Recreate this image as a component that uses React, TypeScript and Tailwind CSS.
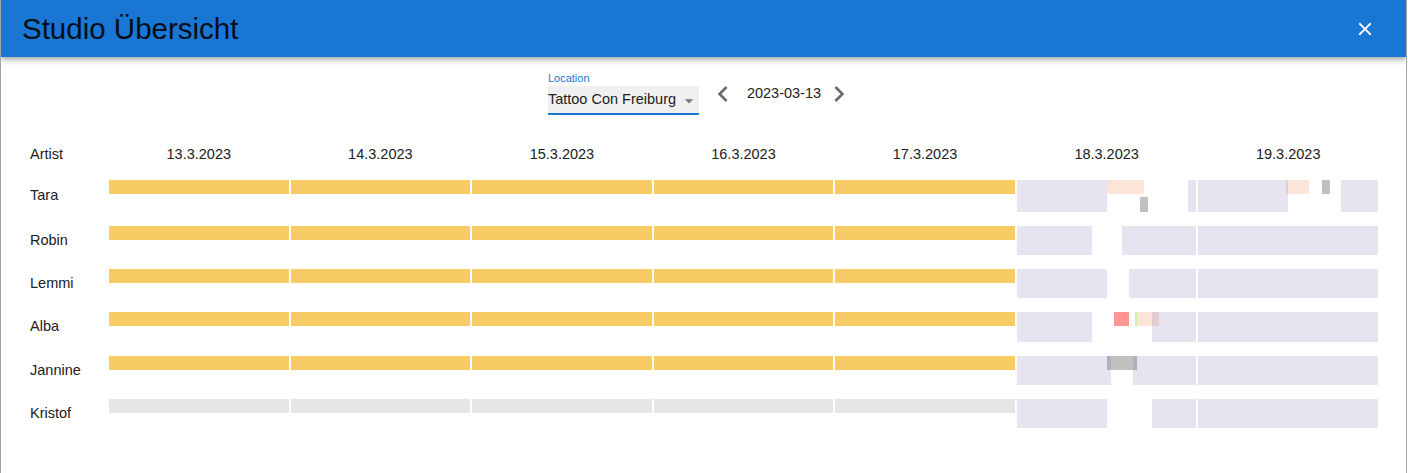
import React from "react";

type Block = {
  from: number;
  to: number;
  kind: "free" | "peach" | "gray" | "red" | "green";
  line?: "top" | "bottom" | "full";
};

interface ArtistRow {
  name: string;
  height: number;
  week: "booked" | "off";
  d18: Block[];
  d19: Block[];
}

const days = ["13.3.2023", "14.3.2023", "15.3.2023", "16.3.2023", "17.3.2023", "18.3.2023", "19.3.2023"];

const fullDay: Block[] = [{ from: 0, to: 100, kind: "free" }];

const rows: ArtistRow[] = [
  {
    name: "Tara",
    height: 32,
    week: "booked",
    d18: [
      { from: 50, to: 70.7, kind: "peach", line: "top" },
      { from: 68.5, to: 73, kind: "gray", line: "bottom" },
      { from: 0, to: 50, kind: "free" },
      { from: 95.5, to: 100, kind: "free" },
    ],
    d19: [
      { from: 48.8, to: 61.6, kind: "peach", line: "top" },
      { from: 68.8, to: 73.3, kind: "gray", line: "top" },
      { from: 0, to: 50, kind: "free" },
      { from: 79.4, to: 100, kind: "free" },
    ],
  },
  {
    name: "Robin",
    height: 29,
    week: "booked",
    d18: [
      { from: 0, to: 41.8, kind: "free" },
      { from: 58.5, to: 100, kind: "free" },
    ],
    d19: fullDay,
  },
  {
    name: "Lemmi",
    height: 29,
    week: "booked",
    d18: [
      { from: 0, to: 50, kind: "free" },
      { from: 62.4, to: 100, kind: "free" },
    ],
    d19: fullDay,
  },
  {
    name: "Alba",
    height: 30,
    week: "booked",
    d18: [
      { from: 54, to: 62.4, kind: "red", line: "top" },
      { from: 65.8, to: 67, kind: "green", line: "top" },
      { from: 67, to: 79.2, kind: "peach", line: "top" },
      { from: 0, to: 41.8, kind: "free" },
      { from: 75.2, to: 100, kind: "free" },
    ],
    d19: fullDay,
  },
  {
    name: "Jannine",
    height: 29,
    week: "booked",
    d18: [
      { from: 50.1, to: 66.8, kind: "gray", line: "top" },
      { from: 0, to: 52.4, kind: "free" },
      { from: 64.6, to: 100, kind: "free" },
    ],
    d19: fullDay,
  },
  {
    name: "Kristof",
    height: 29,
    week: "off",
    d18: [
      { from: 0, to: 50, kind: "free" },
      { from: 75.2, to: 100, kind: "free" },
    ],
    d19: fullDay,
  },
];

const kindClass: Record<Block["kind"], string> = {
  free: "bg-[rgba(120,100,170,0.18)]",
  peach: "bg-[#fce5d8]",
  gray: "bg-[#c0c0c0]",
  red: "bg-[#ff9595]",
  green: "bg-[#c9f7a0]",
};

const lineClass = {
  top: "top-0 h-[14px]",
  bottom: "bottom-0 h-[15px]",
  full: "top-0 bottom-0",
};

function DayTimeline({ blocks }: { blocks: Block[] }) {
  return (
    <div className="relative h-full">
      {blocks.map((b, i) => (
        <div
          key={i}
          className={`absolute ${lineClass[b.line ?? "full"]} ${kindClass[b.kind]}`}
          style={{ left: `${b.from}%`, width: `${b.to - b.from}%` }}
        />
      ))}
    </div>
  );
}

export default function App() {
  return (
    <div className="w-[1407px] h-[473px] overflow-hidden border-x border-[#a3a3a3] bg-white font-['Liberation_Sans',Arial,sans-serif] text-[#212121]">
      {/* Header */}
      <header className="relative z-10 h-[57px] bg-[#1976d2] flex items-center justify-between pl-[21px] pr-[30px] shadow-[0_2px_4px_-1px_rgba(0,0,0,0.2),0_4px_5px_0_rgba(0,0,0,0.14),0_1px_10px_0_rgba(0,0,0,0.12)]">
        <h1 className="text-[29.5px] leading-none text-black/90">Studio Übersicht</h1>
        <button className="w-[22px] h-[22px] text-white">
          <svg viewBox="0 0 24 24" className="w-[22px] h-[22px]" fill="currentColor">
            <path d="M19 6.41 17.59 5 12 10.59 6.41 5 5 6.41 10.59 12 5 17.59 6.41 19 12 13.41 17.59 19 19 17.59 13.41 12z" />
          </svg>
        </button>
      </header>

      {/* Location + date */}
      <div className="flex justify-center items-center mt-[15px] pr-[4px]">
        <div className="flex flex-col w-[151px]">
          <span className="text-[11px] leading-[13px] text-[#1976d2]">Location</span>
          <div className="mt-[1px] h-[29px] bg-[#f0f0f0] border-b-2 border-[#1976d2] flex items-center justify-between">
            <span className="text-[14.5px] leading-none text-[#212121]">Tattoo Con Freiburg</span>
            <svg viewBox="0 0 24 24" className="w-5 h-5 text-[#757575] mt-[2px]" fill="currentColor">
              <path d="M7 10l5 5 5-5z" />
            </svg>
          </div>
        </div>
        <button className="ml-[8px] w-8 h-8 text-[#6b6b6b]">
          <svg viewBox="0 0 24 24" className="w-8 h-8" fill="currentColor">
            <path d="M15.41 7.41 14 6l-6 6 6 6 1.41-1.41L10.83 12z" />
          </svg>
        </button>
        <span className="ml-[8px] text-[14.5px] text-[#212121]">2023-03-13</span>
        <button className="ml-[2px] w-8 h-8 text-[#6b6b6b]">
          <svg viewBox="0 0 24 24" className="w-8 h-8" fill="currentColor">
            <path d="M10 6 8.59 7.41 13.17 12l-4.58 4.59L10 18l6-6z" />
          </svg>
        </button>
      </div>

      {/* Schedule grid */}
      <div className="pl-[29px] pr-[28px] mt-[29px]">
        <div className="grid grid-cols-[77px_repeat(7,minmax(0,1fr))] gap-x-[2px] h-[20px] items-center text-[14.5px]">
          <span>Artist</span>
          {days.map((d) => (
            <span key={d} className="text-center">
              {d}
            </span>
          ))}
        </div>

        <div className="flex flex-col gap-[14px] mt-[16px]">
          {rows.map((row) => (
            <div
              key={row.name}
              className="grid grid-cols-[77px_repeat(7,minmax(0,1fr))] gap-x-[2px]"
              style={{ height: row.height }}
            >
              <div className="flex items-center text-[14.5px]">{row.name}</div>
              {[0, 1, 2, 3, 4].map((i) => (
                <div key={i}>
                  <div className={`h-[14px] ${row.week === "booked" ? "bg-[#f8cb65]" : "bg-[#e6e6e6]"}`} />
                </div>
              ))}
              <DayTimeline blocks={row.d18} />
              <DayTimeline blocks={row.d19} />
            </div>
          ))}
        </div>
      </div>
    </div>
  );
}
